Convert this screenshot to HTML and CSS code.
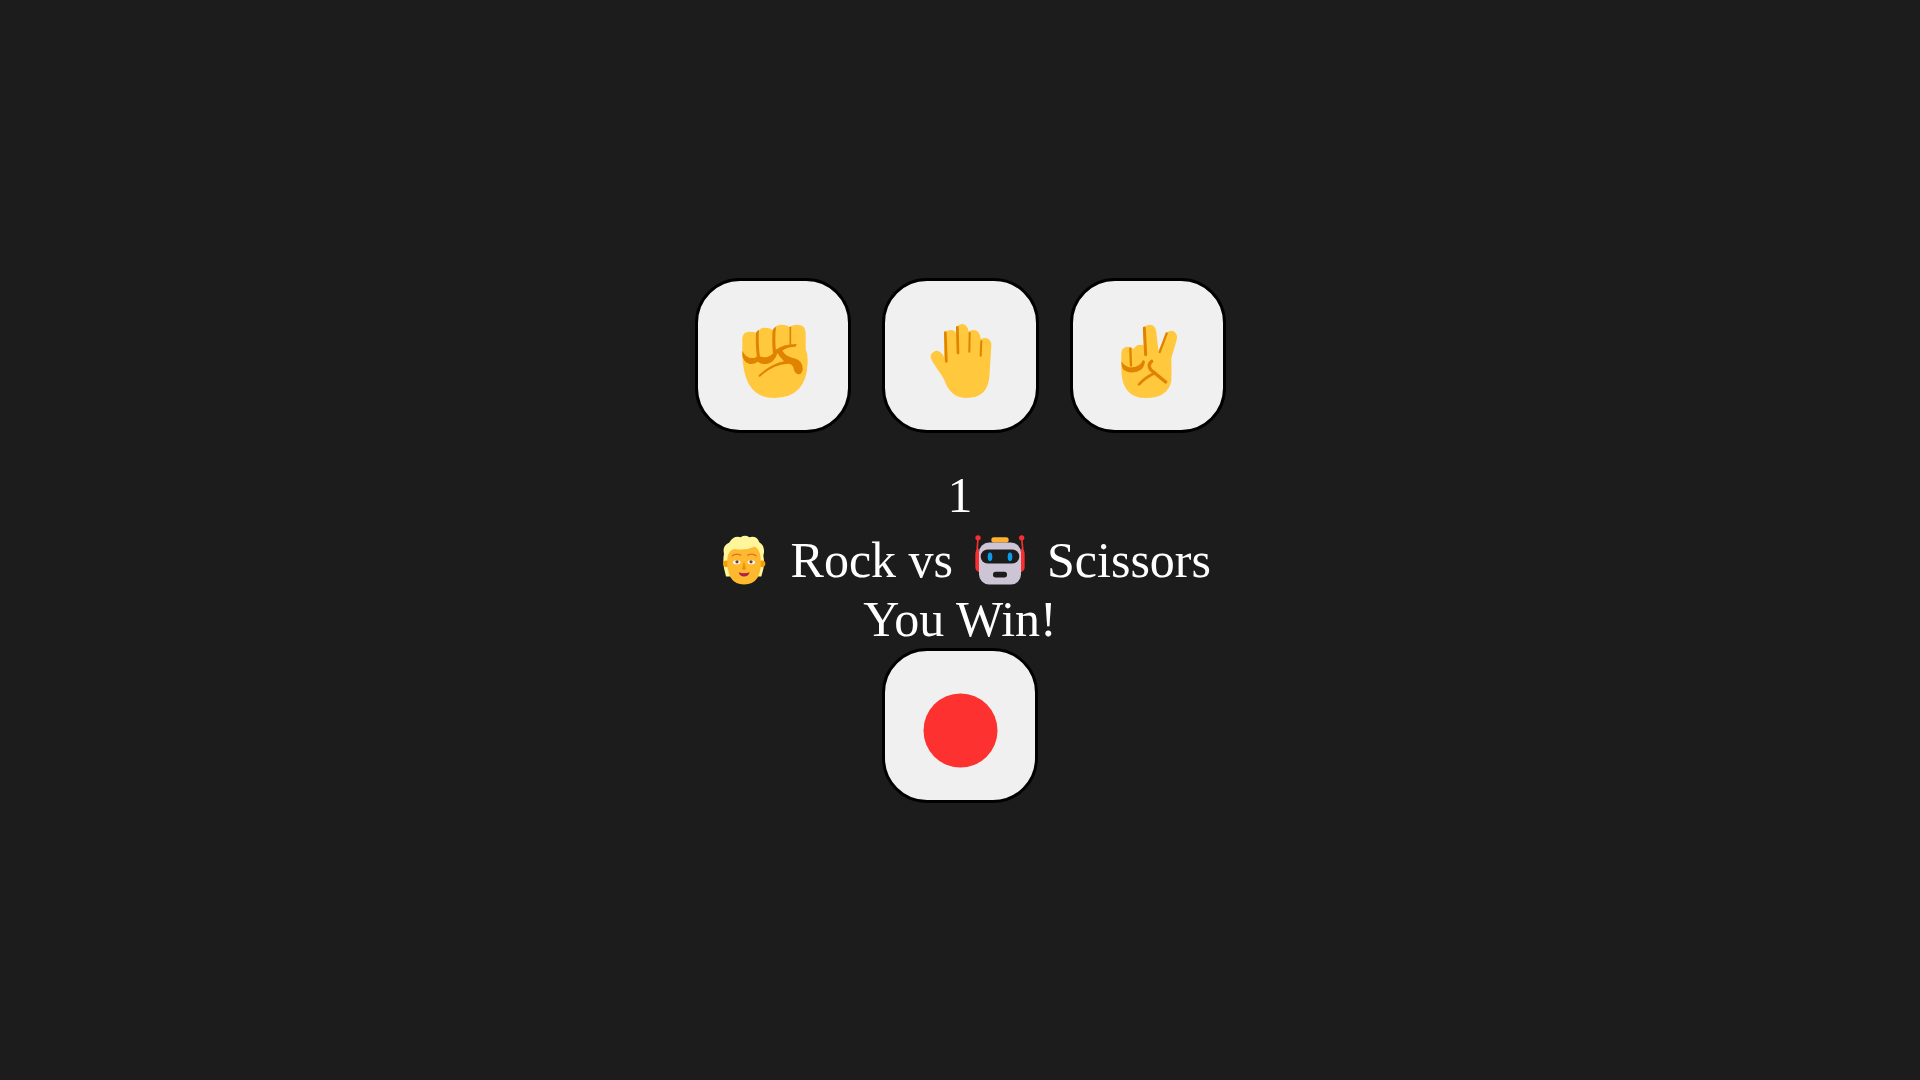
FILE: index.html
```html
<!DOCTYPE html>
<html lang="en">
<head>
    <meta charset="UTF-8">
    <meta name="viewport" content="width=device-width, initial-scale=1.0">
    <title>Rock Paper Scissors</title>
    <link rel="stylesheet" href="styles.css">
</head>
<body>
    <main class="game">
        <div class="choices">
            <button class="game-btn" aria-label="Rock">
                <svg class="btn-icon" viewBox="151 142 255 255">
                    <path class="skin" d="M185 205Q185 183 207 183Q225 183 230 190Q234 171 252 171Q270 171 277 180Q282 162 302 162Q320 162 327 170Q334 162 350 162Q375 162 375 187L375 235Q382 250 381 275Q378 382 280 382Q188 382 185 250Z"/>
                    <path class="dark" d="M185 240Q195 262 215 262Q228 262 232 252Q245 264 262 258Q278 252 287 235L292 245Q280 278 258 280Q242 282 232 273Q218 282 205 279Q188 272 185 255Z"/>
                    <path class="dark" d="M226 186Q229 180 235 178Q232 210 238 262L229 262Q224 220 226 186Z"/>
                    <path class="dark" d="M276 178Q280 170 286 168Q282 200 286 245L277 250Q273 210 276 178Z"/>
                    <path class="crease" stroke-width="5" d="M329 170L329 222"/>
                    <path class="dark" d="M285 238Q305 220 348 220L345 228Q320 228 305 240Q315 258 345 264Q368 272 366 298Q362 314 350 310Q340 305 338 290Q335 280 322 279Q275 282 238 318Q234 320 234 314Q270 280 310 272Q295 258 285 238Z"/>
                </svg>
            </button>
            <button class="game-btn" aria-label="Paper">
                <svg class="btn-icon" viewBox="142 142 255 255">
                    <path class="skin" d="M184 270Q172 250 194 241Q208 238 220 258L220 200Q222 178 240 178Q252 178 256 188L256 180Q258 160 275 160Q292 162 294 185Q298 178 310 178Q328 180 330 205Q338 202 345 202Q362 204 362 225L356 320Q350 382 288 382Q240 382 222 330Q215 315 200 295Z"/>
                    <path class="crease" stroke-width="8" d="M224 186L227 272"/>
                    <path class="crease" stroke-width="8" d="M260 170L262 247"/>
                    <path class="crease" stroke-width="6" d="M297 186L296 243"/>
                    <path class="crease" stroke-width="6" d="M332 212L330 255"/>
                </svg>
            </button>
            <button class="game-btn" aria-label="Scissors">
                <svg class="btn-icon" viewBox="136 142 255 255">
                    <path class="skin" d="M185 250Q184 230 203 228Q215 228 222 235Q232 218 252 224L250 185Q252 162 270 162Q288 162 290 185L297 245L316 195Q324 178 340 181Q356 188 351 208L335 262Q336 300 335 330Q325 382 258 382Q188 382 185 300Z"/>
                    <path class="dark" d="M185 272Q198 292 218 290Q240 290 250 268L256 272Q254 298 232 303Q205 310 190 296Q185 288 185 272Z"/>
                    <path class="crease" stroke-width="9" d="M254 172L258 252"/>
                    <path class="crease" stroke-width="7" d="M321 188L300 244"/>
                    <path class="crease" stroke-width="7" d="M212 234L214 285"/>
                    <path class="crease" stroke-width="10" d="M276 272Q262 285 274 298L318 334"/>
                    <path class="crease" stroke-width="8" d="M286 307Q260 318 238 341"/>
                </svg>
            </button>
        </div>
        <div class="status">
            <div class="round">1</div>
            <div class="versus">
                <svg class="face-icon" viewBox="33 13.5 198 198">
                    <path fill="#FFF69B" d="M78 168Q66 130 72 100Q66 75 88 66Q100 44 122 50Q135 42 148 50Q170 44 178 65Q198 78 190 105Q196 135 184 168Z"/>
                    <circle cx="79" cy="130" r="10" fill="#F59F00"/>
                    <circle cx="186" cy="130" r="10" fill="#F59F00"/>
                    <path fill="#FFB92E" d="M82 112Q88 84 108 86Q140 90 165 78Q180 88 182 112Q188 192 132 192Q78 192 82 112Z"/>
                    <path fill="none" stroke="#D8713A" stroke-width="4" stroke-linecap="round" d="M97 106Q107 97 122 104M143 104Q158 97 168 106"/>
                    <ellipse cx="110" cy="125" rx="11" ry="6" fill="#fff"/>
                    <ellipse cx="154" cy="125" rx="11" ry="6" fill="#fff"/>
                    <circle cx="111" cy="124" r="5" fill="#6B4332"/>
                    <circle cx="153" cy="124" r="5" fill="#6B4332"/>
                    <path fill="#ED9200" d="M132 122L138 146Q132 150 126 146Z"/>
                    <path fill="#B01E4F" d="M116 155Q132 161 149 155Q145 168 132 168Q120 168 116 155Z"/>
                </svg>
                Rock vs
                <svg class="face-icon" viewBox="22 13.5 198 198">
                    <path fill="none" stroke="#F92F2F" stroke-width="5" stroke-linecap="round" d="M55 52L52 95M186 52L190 95"/>
                    <path fill="#F92F2F" d="M47 100Q47 88 58 85L58 155Q47 150 47 140Z"/>
                    <path fill="#F92F2F" d="M195 100Q195 88 184 85L184 155Q195 150 195 140Z"/>
                    <circle cx="55" cy="52" r="8" fill="#F92F2F"/>
                    <circle cx="186" cy="52" r="8" fill="#F92F2F"/>
                    <rect x="95" y="50" width="52" height="16" rx="7" fill="#FFB02E"/>
                    <rect x="58" y="66" width="126" height="126" rx="30" fill="#CDC4D6"/>
                    <rect x="63" y="87" width="116" height="42" rx="21" fill="#1C1C1C"/>
                    <ellipse cx="91" cy="109" rx="7" ry="13" fill="#0B9BE8"/>
                    <ellipse cx="151" cy="109" rx="7" ry="13" fill="#0B9BE8"/>
                    <rect x="100" y="154" width="42" height="17" rx="8" fill="#1C1C1C"/>
                </svg>
                Scissors
            </div>
            <div class="result">You Win!</div>
        </div>
        <button class="game-btn" aria-label="Record">
            <svg class="btn-icon" viewBox="0 0 85 85">
                <circle cx="43.5" cy="42.5" r="37" fill="#FC3130"/>
            </svg>
        </button>
    </main>
</body>
</html>
```

FILE: styles.css
```css
body {
    font-family: "Liberation Serif", serif;
    background-color: #1c1c1c;
    color: #fff;
    margin: 0;
    min-height: 100vh;
    display: flex;
    justify-content: center;
    align-items: center;
}

.game {
    display: flex;
    flex-direction: column;
    align-items: center;
}

.choices {
    display: flex;
    gap: 31px;
    margin-left: 1px;
}

.game-btn {
    width: 156.4px;
    height: 155px;
    padding: 10px 0 0;
    box-sizing: border-box;
    background: #f0f0f0;
    border: 3px solid #000;
    border-radius: 45px;
    display: flex;
    justify-content: center;
    align-items: center;
    cursor: pointer;
}

.btn-icon {
    width: 85px;
    height: 85px;
}

.skin {
    fill: #ffc83d;
}

.dark {
    fill: #df8300;
}

.crease {
    fill: none;
    stroke: #df8300;
    stroke-linecap: round;
    stroke-linejoin: round;
}

.status {
    margin-top: 33px;
    font-size: 50px;
    line-height: 58px;
    text-align: center;
}

.round {
    line-height: 59px;
}

.versus {
    line-height: 0;
}

.result {
    line-height: 57px;
}

.face-icon {
    width: 66px;
    height: 66px;
    margin: 0 1.5px;
    vertical-align: -14px;
}
```
